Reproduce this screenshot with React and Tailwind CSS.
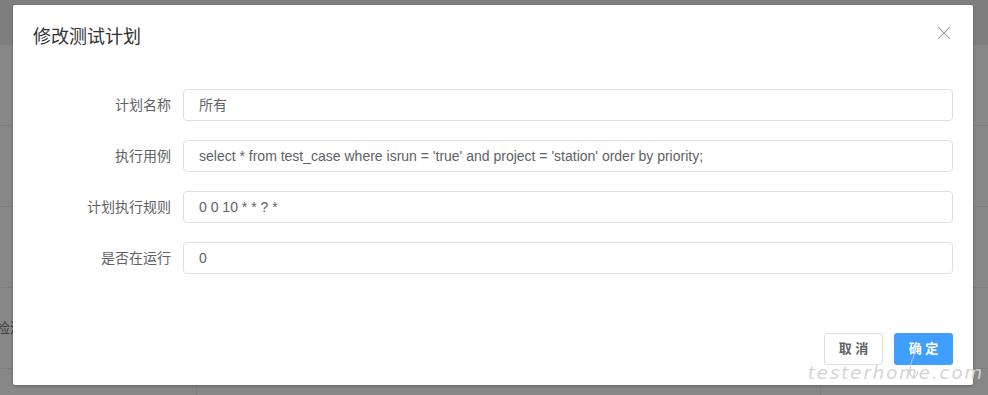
import { X } from 'lucide-react';

const rows = [
  { label: '计划名称', value: '所有' },
  { label: '执行用例', value: "select * from test_case where isrun = 'true' and project = 'station' order by priority;" },
  { label: '计划执行规则', value: '0 0 10 * * ? *' },
  { label: '是否在运行', value: '0' },
];

const font = { fontFamily: '"Liberation Sans", "Noto Sans CJK SC", sans-serif' };

const App = () => {
  return (
    <div className="relative w-[988px] h-[395px] overflow-hidden bg-[#878787]" style={font}>

      {/* page behind the mask */}
      <div className="flex flex-col">
        <div className="h-[45px] bg-[#7e7e7e]" />
        {[0, 1, 2, 3, 4].map((i) => (
          <div key={i} className="flex h-[81px] border-b border-[#7d7d7d]">
            <div className="w-[197px] border-r border-[#7d7d7d] flex items-center">
              {i === 3 && <span className="-ml-[4px] text-[14px] text-[#3a3a3a]">检测</span>}
            </div>
            <div className="w-[624px] border-r border-[#7d7d7d]" />
            <div className="flex-1" />
          </div>
        ))}
      </div>

      {/* dialog */}
      <div className="absolute left-[13px] top-[5px] w-[960px] h-[380px] bg-white rounded-[2px] shadow-[0_1px_3px_rgba(0,0,0,0.3)] flex flex-col">

        {/* header */}
        <div className="relative px-5 pt-5 pb-[10px]">
          <h2 className="text-[18px] leading-6 text-[#303133]">修改测试计划</h2>
          <button className="absolute right-[18px] top-[17px] text-[#909399]">
            <X size={22} strokeWidth={1.1} />
          </button>
        </div>

        {/* body */}
        <div className="px-5 pt-[30px] flex flex-col gap-[19px]">
          {rows.map((row) => (
            <div key={row.label} className="flex items-center">
              <label className="w-[150px] pr-3 text-right text-[14px] text-[#606266]">{row.label}</label>
              <div className="flex-1 h-[32px] border border-[#dcdfe6] rounded-[4px] px-[15px] flex items-center text-[14px] text-[#606266]">
                {row.value}
              </div>
            </div>
          ))}
        </div>

        {/* footer */}
        <div className="mt-auto px-5 pb-[20px] flex justify-end gap-[11px]">
          <button className="w-[59px] h-[32px] border border-[#dcdfe6] rounded-[3px] bg-white text-[13px] font-semibold text-[#606266]">
            取 消
          </button>
          <button className="w-[59px] h-[32px] rounded-[3px] bg-[#409eff] text-[13px] font-semibold text-white">
            确 定
          </button>
        </div>
      </div>

      {/* watermark */}
      <div className="absolute right-[4px] bottom-[9px] text-[18px] italic tracking-[2px] text-[#d4d4d4]" style={{ fontFamily: '"DejaVu Sans", sans-serif', fontWeight: 200 }}>
        testerhome.com
      </div>
      <svg className="absolute left-[905px] top-[345px]" width="20" height="40" viewBox="0 0 20 40" fill="none">
        <path d="M12 2 C10 10, 4 18, 5 28 C6 34, 12 34, 13 26" stroke="#c4c4c4" strokeWidth="1" />
      </svg>
    </div>
  );
};

export default App;
